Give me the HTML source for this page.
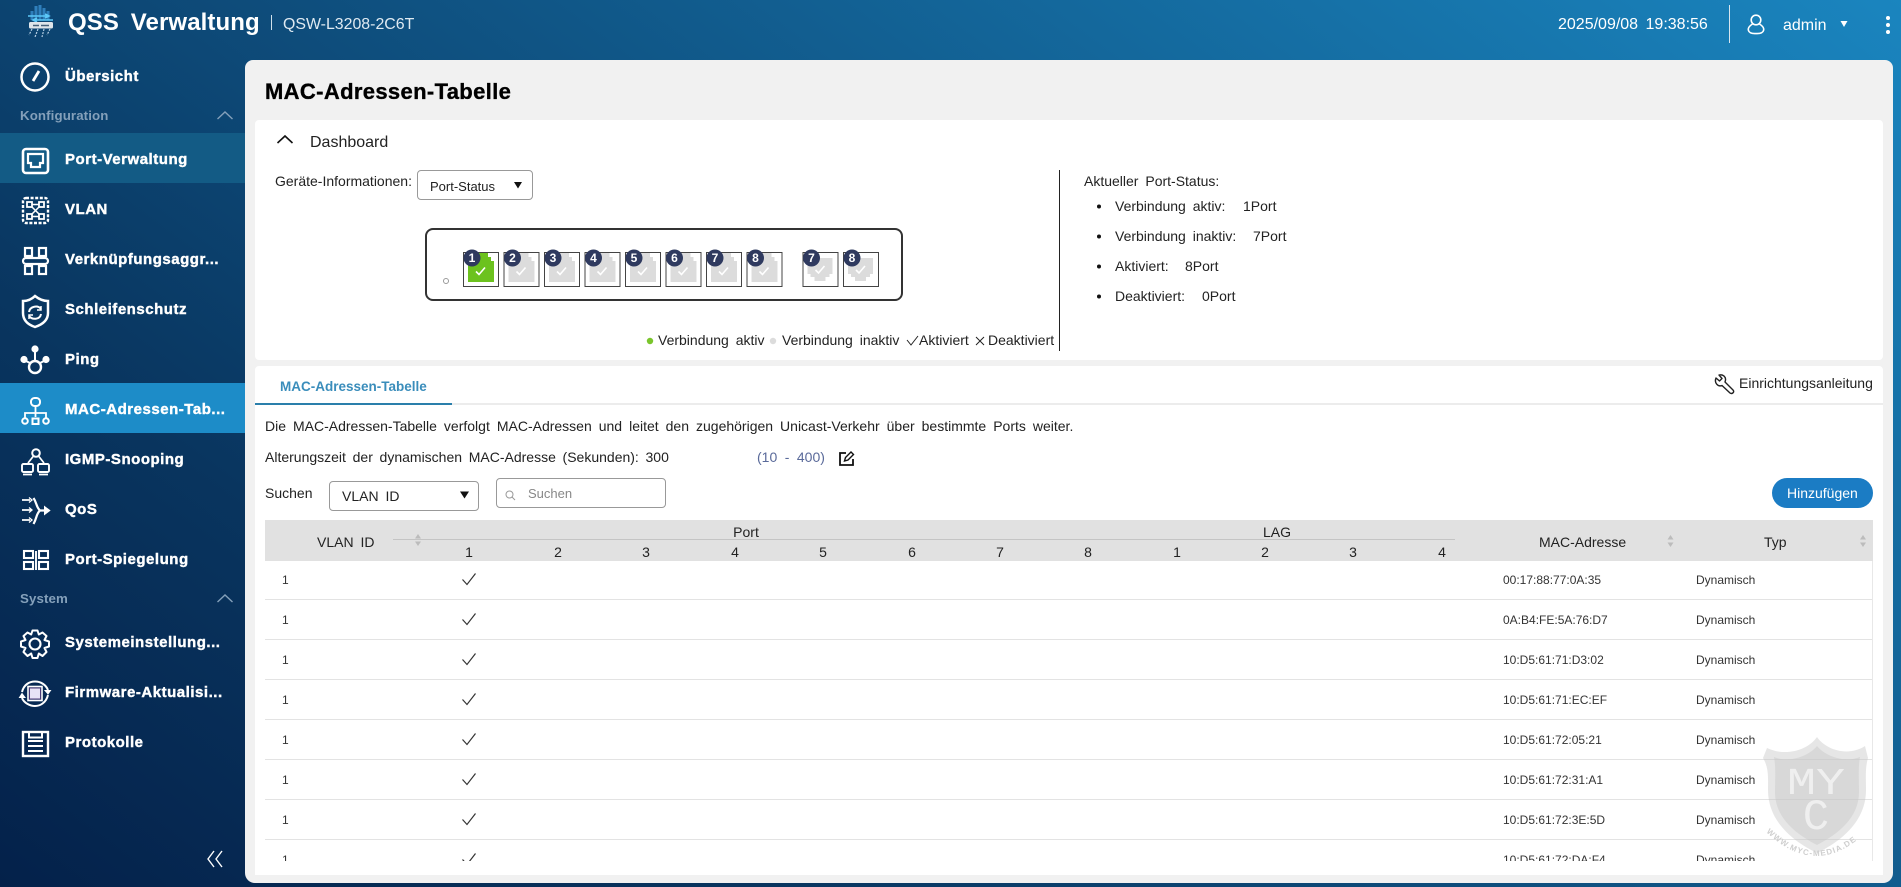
<!DOCTYPE html>
<html lang="de"><head><meta charset="utf-8"><title>QSS Verwaltung</title>
<style>
*{box-sizing:border-box}
html,body{margin:0;padding:0;width:1901px;height:887px;overflow:hidden}
body{position:relative;font-family:"Liberation Sans",Arial,sans-serif;font-size:14px;color:#222;background:linear-gradient(36.5deg,#04214a 0%,#09355f 25%,#1a85bf 100%)}
.t{position:absolute;white-space:nowrap;line-height:20px;height:20px}
.w{word-spacing:3px}
.nav{position:absolute;left:65px;white-space:nowrap;line-height:20px;height:20px;color:#fff;font-weight:bold;font-size:15px;letter-spacing:.52px;-webkit-text-stroke:.4px #fff}
.sec{position:absolute;left:20px;white-space:nowrap;line-height:20px;height:20px;color:#84a0ba;font-weight:bold;font-size:13.3px;letter-spacing:.1px}
.band{position:absolute;left:0;width:245px;height:50px}
.box{position:absolute;background:#fff}
.sel{position:absolute;border:1px solid #999;border-radius:4px;background:#fff}
.c{text-align:center;width:40px;margin-left:-20px}
.row{position:absolute;left:0;width:1608px;height:40px;border-bottom:1px solid #e3e3e3;font-size:12px;color:#333}
.row span{position:absolute;top:10px;line-height:20px;white-space:nowrap}
svg{position:absolute;left:0;top:0;overflow:visible}
</style></head><body>

<div class="band" style="top:133px;background:#135b85"></div>
<div class="band" style="top:383px;background:#1d8cc8"></div>

<div class="box" style="left:245px;top:60px;width:1648px;height:823px;background:#f1f1f1;border-radius:8px 8px 10px 10px"></div>
<div class="box" style="left:255px;top:120px;width:1628px;height:240px;border-radius:4px"></div>
<div class="box" style="left:255px;top:366px;width:1628px;height:37px;border-radius:4px 4px 0 0"></div>
<div class="box" style="left:255px;top:403px;width:1628px;height:2px;background:#ececec"></div>
<div class="box" style="left:255px;top:403px;width:197px;height:2px;background:#2a7fab"></div>
<div class="box" style="left:255px;top:405px;width:1628px;height:470px"></div>

<!-- header -->
<div class="t" style="left:68px;top:10px;height:26px;line-height:26px;color:#fff;font-weight:bold;font-size:24px;word-spacing:5px;letter-spacing:.1px">QSS Verwaltung</div>
<div class="box" style="left:271px;top:15px;width:1px;height:15px;background:#cfe0ea"></div>
<div class="t" style="left:283px;top:15px;color:#dfeaf2;font-size:15.9px">QSW-L3208-2C6T</div>
<div class="t" style="left:1558px;top:15px;color:#fff;font-size:16px;word-spacing:3px">2025/09/08 19:38:56</div>
<div class="box" style="left:1729px;top:5px;width:1px;height:38px;background:#d8e6ef"></div>
<div class="t" style="left:1783px;top:16px;color:#fff;font-size:16px">admin</div>

<!-- sidebar text -->
<div class="nav" style="top:67px">Übersicht</div>
<div class="sec" style="top:106px">Konfiguration</div>
<div class="nav" style="top:150px">Port-Verwaltung</div>
<div class="nav" style="top:200px">VLAN</div>
<div class="nav" style="top:250px">Verknüpfungsaggr...</div>
<div class="nav" style="top:300px">Schleifenschutz</div>
<div class="nav" style="top:350px">Ping</div>
<div class="nav" style="top:400px">MAC-Adressen-Tab...</div>
<div class="nav" style="top:450px">IGMP-Snooping</div>
<div class="nav" style="top:500px">QoS</div>
<div class="nav" style="top:550px">Port-Spiegelung</div>
<div class="sec" style="top:589px">System</div>
<div class="nav" style="top:633px">Systemeinstellung...</div>
<div class="nav" style="top:683px">Firmware-Aktualisi...</div>
<div class="nav" style="top:733px">Protokolle</div>

<!-- page heading -->
<div class="t" style="left:265px;top:82px;color:#000;font-weight:bold;font-size:22px;letter-spacing:.35px;-webkit-text-stroke:.35px #000">MAC-Adressen-Tabelle</div>
<div class="t" style="left:310px;top:133px;font-size:16px">Dashboard</div>

<div class="t" style="left:275px;top:171px">Geräte-Informationen:</div>
<div class="sel" style="left:417px;top:170px;width:116px;height:30px"></div>
<div class="t" style="left:430px;top:177px;font-size:13px">Port-Status</div>

<div class="box" style="left:425px;top:228px;width:478px;height:73px;border:2px solid #333;border-radius:8px"></div>

<div class="t w" style="left:658px;top:330px">Verbindung aktiv</div>
<div class="t w" style="left:782px;top:330px">Verbindung inaktiv</div>
<div class="t" style="left:919px;top:330px">Aktiviert</div>
<div class="t" style="left:988px;top:330px">Deaktiviert</div>

<div class="box" style="left:1059px;top:170px;width:1px;height:181px;background:#222"></div>
<div class="t w" style="left:1084px;top:171px">Aktueller Port-Status:</div>
<div class="t w" style="left:1115px;top:196px">Verbindung aktiv:</div><div class="t" style="left:1243px;top:196px">1Port</div>
<div class="t w" style="left:1115px;top:226px">Verbindung inaktiv:</div><div class="t" style="left:1253px;top:226px">7Port</div>
<div class="t w" style="left:1115px;top:256px">Aktiviert:</div><div class="t" style="left:1185px;top:256px">8Port</div>
<div class="t w" style="left:1115px;top:286px">Deaktiviert:</div><div class="t" style="left:1202px;top:286px">0Port</div>

<!-- tab -->
<div class="t" style="left:280px;top:377px;font-size:13.5px;font-weight:bold;color:#3a8dbb">MAC-Adressen-Tabelle</div>
<div class="t" style="left:1739px;top:373px">Einrichtungsanleitung</div>
<div class="t" style="left:265px;top:416px;word-spacing:3.1px">Die MAC-Adressen-Tabelle verfolgt MAC-Adressen und leitet den zugehörigen Unicast-Verkehr über bestimmte Ports weiter.</div>
<div class="t" style="left:265px;top:447px;word-spacing:2.8px">Alterungszeit der dynamischen MAC-Adresse (Sekunden): 300</div>
<div class="t" style="left:757px;top:447px;color:#5a6a9a;word-spacing:3.6px">(10 - 400)</div>

<div class="t" style="left:265px;top:483px">Suchen</div>
<div class="sel" style="left:329px;top:481px;width:150px;height:30px"></div>
<div class="t w" style="left:342px;top:486px;font-size:14px">VLAN ID</div>
<div class="sel" style="left:496px;top:478px;width:170px;height:30px"></div>
<div class="t" style="left:528px;top:484px;color:#888;font-size:13px">Suchen</div>

<div class="box" style="left:1772px;top:478px;width:101px;height:30px;border-radius:15px;background:#1b7cc4"></div>
<div class="t" style="left:1787px;top:483px;color:#fff;font-size:14px">Hinzufügen</div>

<!-- table head -->
<div class="box" style="left:265px;top:520px;width:1608px;height:41px;background:#e1e1e1"></div>
<div class="box" style="left:393px;top:539px;width:1062px;height:1px;background:#c4c4c4"></div>
<div class="t w" style="left:317px;top:532px">VLAN ID</div>
<div class="t c" style="left:746px;top:522px">Port</div>
<div class="t c" style="left:1277px;top:522px">LAG</div>
<div class="t c" style="left:469px;top:542px">1</div>
<div class="t c" style="left:558px;top:542px">2</div>
<div class="t c" style="left:646px;top:542px">3</div>
<div class="t c" style="left:735px;top:542px">4</div>
<div class="t c" style="left:823px;top:542px">5</div>
<div class="t c" style="left:912px;top:542px">6</div>
<div class="t c" style="left:1000px;top:542px">7</div>
<div class="t c" style="left:1088px;top:542px">8</div>
<div class="t c" style="left:1177px;top:542px">1</div>
<div class="t c" style="left:1265px;top:542px">2</div>
<div class="t c" style="left:1353px;top:542px">3</div>
<div class="t c" style="left:1442px;top:542px">4</div>
<div class="t" style="left:1539px;top:532px">MAC-Adresse</div>
<div class="t" style="left:1764px;top:532px">Typ</div>

<!-- table rows -->
<div style="position:absolute;left:265px;top:561px;width:1608px;height:300px;overflow:hidden;background:#fff;border-right:1px solid #e8e8e8">
<div class="row" style="top:-1px"><span style="left:17px">1</span><span style="left:1238px">00:17:88:77:0A:35</span><span style="left:1431px">Dynamisch</span></div>
<div class="row" style="top:39px"><span style="left:17px">1</span><span style="left:1238px">0A:B4:FE:5A:76:D7</span><span style="left:1431px">Dynamisch</span></div>
<div class="row" style="top:79px"><span style="left:17px">1</span><span style="left:1238px">10:D5:61:71:D3:02</span><span style="left:1431px">Dynamisch</span></div>
<div class="row" style="top:119px"><span style="left:17px">1</span><span style="left:1238px">10:D5:61:71:EC:EF</span><span style="left:1431px">Dynamisch</span></div>
<div class="row" style="top:159px"><span style="left:17px">1</span><span style="left:1238px">10:D5:61:72:05:21</span><span style="left:1431px">Dynamisch</span></div>
<div class="row" style="top:199px"><span style="left:17px">1</span><span style="left:1238px">10:D5:61:72:31:A1</span><span style="left:1431px">Dynamisch</span></div>
<div class="row" style="top:239px"><span style="left:17px">1</span><span style="left:1238px">10:D5:61:72:3E:5D</span><span style="left:1431px">Dynamisch</span></div>
<div class="row" style="top:279px"><span style="left:17px">1</span><span style="left:1238px">10:D5:61:72:DA:F4</span><span style="left:1431px">Dynamisch</span></div>
</div>

<svg width="1901" height="887" viewBox="0 0 1901 887" fill="none">
<defs>
<g id="pu"><rect x=".5" y=".5" width="35" height="34" fill="#fff" stroke="#444"/><path d="M11 1H25V5H28V9H31V30H5V9H8V5H11Z" fill="#dcdcdc"/><path d="M13 19.5L16 22.5L22 15.5" stroke="#fff" stroke-width="1.6"/></g>
<g id="pd"><rect x=".5" y=".5" width="35" height="34" fill="#fff" stroke="#444"/><path d="M5 6H30V22H27V25H23V29H12V25H8V22H5Z" fill="#dcdcdc"/><path d="M13 18L16 21L22 14" stroke="#fff" stroke-width="1.6"/></g>
<g id="sort"><path d="M-3 -1.5L0 -6L3 -1.5Z M-3 1.5L0 6L3 1.5Z" fill="#bcbcbc" stroke="none"/></g>
<g id="chk"><path d="M-6.5 .5L-2 5.5L6.5 -5.5" stroke="#333" stroke-width="1.2"/></g>
</defs>

<!-- logo -->
<g>
<path d="M36 6V20M40 5V20M44 8V20M48 11V20M32 11V20" stroke="#2f7fbc" stroke-width="3"/>
<path d="M28 16H49M45 14L49 16L45 18" stroke="#5cc8f8" stroke-width="1.6"/>
<path d="M53 20H33M37 18L33 20L37 22" stroke="#5cc8f8" stroke-width="1.6"/>
<rect x="29" y="22" width="24" height="6.500" rx="1.500" fill="#dfe5ea"/>
<path d="M33 25.500H39M41 25.500H49" stroke="#47617a" stroke-width="1.500"/>
<path d="M32 29L29 35M38 29L35 37M44 29L42 37M50 29L47 35" stroke="#b7d0e4" stroke-dasharray="2 1.200" stroke-width="1.200"/>
</g>

<!-- header right icons -->
<g stroke="#fff" stroke-width="1.600"><circle cx="1756" cy="20" r="4.800"/><path d="M1752.500 24C1746 28 1747 34 1756 33.500C1765 34 1766 28 1759.500 24"/></g>
<path d="M1840.500 21H1847.500L1844 27Z" fill="#fff"/>
<circle cx="1888" cy="18" r="2" fill="#fff"/><circle cx="1888" cy="25" r="2" fill="#fff"/><circle cx="1888" cy="32" r="2" fill="#fff"/>

<!-- sidebar icons -->
<g stroke="#fff" stroke-width="2">
<circle cx="35" cy="77" r="13.500" stroke-width="2.500"/><path d="M33 81L39 71" stroke-width="2.800"/>
<path d="M217.500 119L225 112L232.500 119" stroke="#84a0ba" stroke-width="1.400"/>
<path d="M217.500 602L225 595L232.500 602" stroke="#84a0ba" stroke-width="1.400"/>
<rect x="23" y="149" width="25" height="24" rx="3" stroke-width="2.600"/><path d="M28 154H43V163H40V167H31V163H28Z" stroke-width="2.200"/>
<rect x="23" y="198" width="25" height="25" rx="3" stroke-dasharray="3 1.600" stroke-width="2.400"/><rect x="27" y="202" width="5" height="5" stroke-width="1.800"/><rect x="39" y="202" width="5" height="5" stroke-width="1.800"/><rect x="27" y="214" width="5" height="5" stroke-width="1.800"/><rect x="39" y="214" width="5" height="5" stroke-width="1.800"/><path d="M32 207L39 214M39 207L32 214M32 204.500H39M32 216.500H39" stroke-width="1.500"/>
<rect x="25" y="248" width="7" height="8" stroke-width="2.200"/><rect x="39" y="248" width="7" height="8" stroke-width="2.200"/><rect x="25" y="266" width="7" height="8" stroke-width="2.200"/><rect x="39" y="266" width="7" height="8" stroke-width="2.200"/><rect x="23" y="258" width="25" height="6" rx="3" stroke-width="2.200"/>
<path d="M35 296C40 300 44 301 48 301V313C48 321 41 325 35 327C29 325 23 321 23 313V301C27 301 31 300 35 296Z" stroke-width="2.500"/><path d="M29 312C30 306 38 305 41 309M41 314C40 320 32 320 29 316" stroke-width="2"/><path d="M41 306V310H37M29 319V315H33" stroke-width="1.500"/>
<circle cx="35" cy="367" r="6" stroke-width="2.400"/><path d="M35 361V350M30 363L24 360M40 363L46 360" stroke-width="2"/><circle cx="35" cy="349" r="2.600" fill="#fff"/><circle cx="24" cy="359.500" r="2.600" fill="#fff"/><circle cx="46" cy="359.500" r="2.600" fill="#fff"/>
<rect x="31" y="398" width="9" height="8" rx="3.500" stroke-width="2"/><path d="M35.500 406V413M25 419V413H46V419M35.500 413V417" stroke-width="1.800"/><circle cx="25" cy="421" r="2.800" stroke-width="2"/><rect x="32.500" y="418.500" width="6" height="5.500" stroke-width="2"/><circle cx="46" cy="421" r="2.800" stroke-width="2"/>
<circle cx="36" cy="453" r="3.800" stroke-width="2"/><path d="M33.500 456L28 463M38.500 456L44 463" stroke-width="1.700"/><rect x="22" y="464" width="11" height="8" rx="1.500" stroke-width="1.900"/><rect x="38" y="464" width="11" height="8" rx="1.500" stroke-width="1.900"/><path d="M23 474.500H32M39 474.500H48" stroke-width="1.800"/>
<path d="M22 500H30M22 510H31M22 520H30" stroke-width="1.800"/><path d="M29 497.500L32 500L29 502.500M29 507.500L32 510L29 512.500M29 517.500L32 520L29 522.500" stroke-width="1.300"/><path d="M33.500 498C37 503 36 507 40 510.500C36 514 37 518 33.500 524M40 510.500H47" stroke-width="2.200"/><path d="M45 507.500L49 510.500L45 513.500Z" fill="#fff"/>
<rect x="24" y="551" width="9" height="7" stroke-width="2.100"/><rect x="24" y="562" width="9" height="7" stroke-width="2.100"/><rect x="39" y="551" width="9" height="7" stroke-width="2.100"/><rect x="39" y="562" width="9" height="7" stroke-width="2.100"/><path d="M36 551V570" stroke-width="1.900"/>
<circle cx="35" cy="644" r="5.500" stroke-width="2.100"/><path d="M32.500 630.500H37.500L38.800 634.500L42.500 632.500L46.500 636L44.500 640L49 641.500V646.500L44.500 648L46.500 652L42.500 656L38.800 653.500L37.500 658H32.500L31.200 653.500L27.500 656L23.500 652L25.500 648L21 646.500V641.500L25.500 640L23.500 636L27.500 632.500L31.200 634.500Z" stroke-width="2" stroke-linejoin="round"/>
<rect x="29.500" y="688" width="11" height="11" fill="#e8e3f6" stroke="#4b3a78" stroke-width="1"/><rect x="28" y="686.500" width="14" height="14" stroke="#fff" stroke-width="1.600"/><path d="M22 692C24 684 30 681.500 35 681.500C41 681.500 46 685 48 690M48 695C46 703 40 706 35 706C30 706 24 703 22 698" stroke-width="2"/><path d="M45 690.500H50.500L48 694ZM19.500 697.500H25L22 693.500Z" fill="#fff" stroke-width="1"/>
<rect x="23" y="732" width="25" height="24" stroke-width="2.400"/><path d="M29 733V737.500H42V733" stroke-width="2"/><path d="M28 741H43M28 746H43M28 751H43" stroke-width="2"/>
<path d="M214 851L208 859L214 867M222 851L216 859L222 867" stroke-width="1.400"/>
</g>

<!-- dashboard chevron -->
<path d="M277.500 143L285 136L292.500 143" stroke="#111" stroke-width="1.600"/>
<path d="M514 182H522L518 188.500Z" fill="#111"/>

<!-- switch -->
<circle cx="446" cy="281" r="2.500" fill="#fff" stroke="#999"/>
<g transform="translate(463 252)"><rect x=".5" y=".5" width="35" height="34" fill="#fff" stroke="#444"/><path d="M11 1H25V5H28V9H31V30H5V9H8V5H11Z" fill="#6cc21e"/><path d="M13 19.500L16 22.500L22 15.500" stroke="#fff" stroke-width="1.600"/></g>
<use href="#pu" x="503.500" y="252"/><use href="#pu" x="544" y="252"/><use href="#pu" x="584.500" y="252"/><use href="#pu" x="625" y="252"/><use href="#pu" x="665.500" y="252"/><use href="#pu" x="706" y="252"/><use href="#pu" x="746.500" y="252"/>
<use href="#pd" x="802.500" y="252"/><use href="#pd" x="843" y="252"/>
<g fill="#2f3a5f"><circle cx="472" cy="258" r="8.500"/><circle cx="512.500" cy="258" r="8.500"/><circle cx="553" cy="258" r="8.500"/><circle cx="593.500" cy="258" r="8.500"/><circle cx="634" cy="258" r="8.500"/><circle cx="674.500" cy="258" r="8.500"/><circle cx="715" cy="258" r="8.500"/><circle cx="755.500" cy="258" r="8.500"/><circle cx="811.500" cy="258" r="8.500"/><circle cx="852" cy="258" r="8.500"/></g>
<g font-family="Liberation Sans, sans-serif" font-size="12" font-weight="bold" fill="#fff" text-anchor="middle"><text x="472" y="262">1</text><text x="512.500" y="262">2</text><text x="553" y="262">3</text><text x="593.500" y="262">4</text><text x="634" y="262">5</text><text x="674.500" y="262">6</text><text x="715" y="262">7</text><text x="755.500" y="262">8</text><text x="811.500" y="262">7</text><text x="852" y="262">8</text></g>

<!-- legend glyphs -->
<circle cx="650" cy="341" r="3.200" fill="#7ac52c"/><circle cx="773" cy="341" r="3.200" fill="#dcdcdc"/>
<path d="M907 340L911 345L918 336" stroke="#222" stroke-width="1"/>
<path d="M976 337L984 345M984 337L976 345" stroke="#222" stroke-width="1"/>
<g fill="#111"><circle cx="1099" cy="206.500" r="2"/><circle cx="1099" cy="236.500" r="2"/><circle cx="1099" cy="266.500" r="2"/><circle cx="1099" cy="296.500" r="2"/></g>

<!-- wrench -->
<path d="M1719 375L1722 378.500L1719.500 381L1716 378C1714 383 1718 387 1722 385.500L1730 393C1732 394.500 1735 392 1733 390L1725 382C1727 377 1723 374 1719 375Z" stroke="#222" stroke-width="1.400" stroke-linejoin="round"/>

<!-- edit icon -->
<path d="M846 453H840V465H853V459" stroke="#111" stroke-width="1.800"/><path d="M844.500 461L845.500 457.500L851 452L853.500 454.500L848 460Z" stroke="#111" stroke-width="1.400"/>
<path d="M460 491.500H469L464.500 498.500Z" fill="#111"/>
<circle cx="509.500" cy="494.500" r="3.500" stroke="#999"/><path d="M512 497L515 500" stroke="#999"/>

<!-- sort glyphs -->
<use href="#sort" x="418" y="540"/><use href="#sort" x="1670.500" y="541"/><use href="#sort" x="1863" y="541"/>

<!-- checks -->
<use href="#chk" x="469" y="579"/><use href="#chk" x="469" y="619"/><use href="#chk" x="469" y="659"/><use href="#chk" x="469" y="699"/><use href="#chk" x="469" y="739"/><use href="#chk" x="469" y="779"/><use href="#chk" x="469" y="819"/>
<svg x="0" y="0" width="1901" height="861" viewBox="0 0 1901 861" style="overflow:hidden"><use href="#chk" x="469" y="859"/></svg>

<!-- watermark -->
<g>
<path d="M1817 737C1826 750 1848 757 1865 746L1868 758C1865 768 1866 778 1866 790C1866 822 1840 842 1817 853C1794 842 1768 822 1768 790C1768 778 1769 768 1763 758L1767 748C1786 757 1808 750 1817 737Z" fill="#c4c4c4" fill-opacity=".42"/>
<path d="M1817 746C1826 757 1846 763 1860 757C1858 768 1859 780 1859 792C1859 818 1838 834 1817 845C1796 834 1775 818 1775 792C1775 780 1776 768 1774 757C1788 763 1808 757 1817 746Z" fill="#c8c8c8" fill-opacity=".45"/>
<text x="1816" y="794" text-anchor="middle" font-family="Liberation Mono, monospace" font-size="38" fill="#f2f2f2" fill-opacity=".9" textLength="58" lengthAdjust="spacingAndGlyphs">MY</text>
<text x="1816" y="829" text-anchor="middle" font-family="Liberation Mono, monospace" font-size="44" fill="#f2f2f2" fill-opacity=".9">C</text>
<path id="wmc" d="M1766 832Q1817 880 1866 832"/>
<text font-family="Liberation Sans, sans-serif" font-size="8" font-weight="bold" fill="#cfcfcf" letter-spacing="1.100"><textPath href="#wmc">WWW.MYC-MEDIA.DE</textPath></text>
</g>
</svg>
</body></html>
